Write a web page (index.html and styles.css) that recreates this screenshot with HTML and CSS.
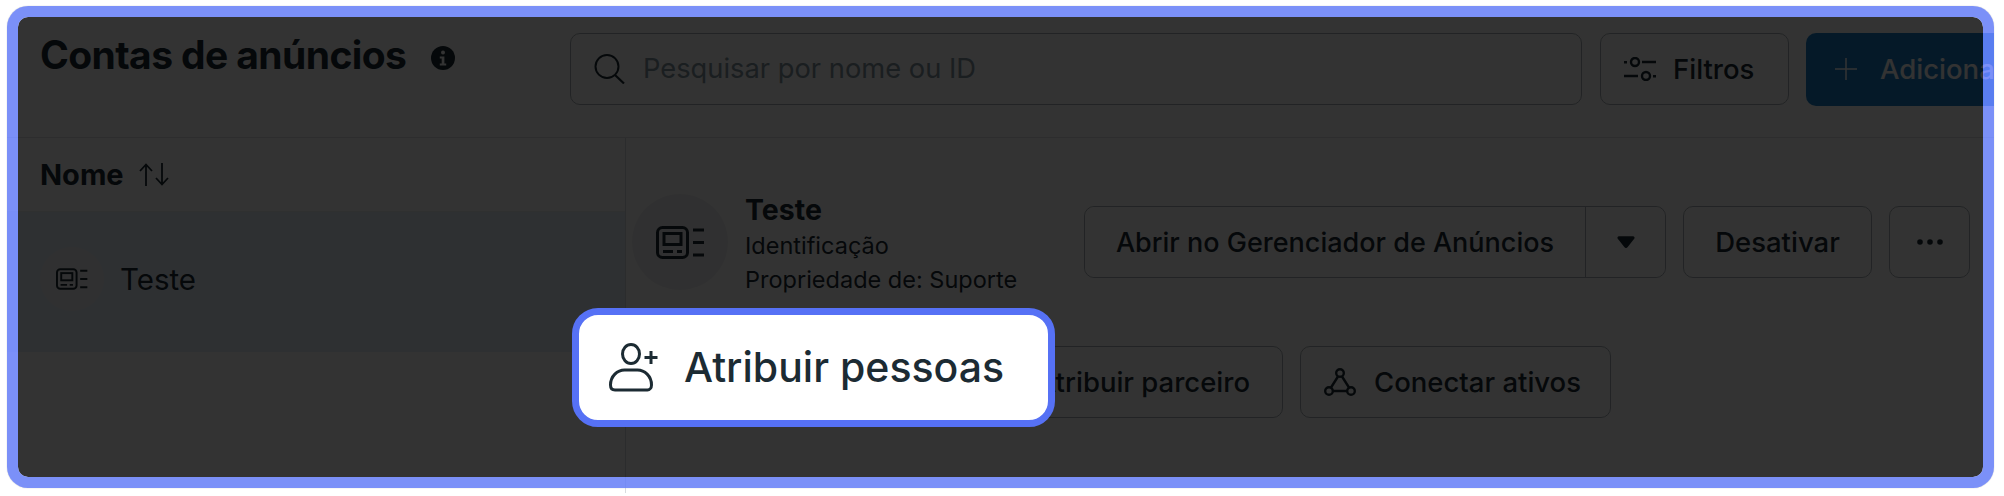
FILE: index.html
```html
<!DOCTYPE html>
<html lang="pt-BR">
<head>
<meta charset="utf-8">
<title>Contas de anúncios</title>
<link rel="stylesheet" href="styles.css">
</head>
<body>
<div class="app">
  <header class="topbar">
    <div class="title-group">
      <h1 class="title">Contas de anúncios</h1>
      <svg class="info-icon" viewBox="0 0 24 24"><circle cx="12" cy="12" r="12" fill="#1c2b33"/><circle cx="12" cy="6.600" r="2" fill="#fff"/><path d="M8.800 10.400h4.600v7.200h1.800v2H8.800v-2h1.900v-5.200H8.800z" fill="#fff"/></svg>
    </div>
    <div class="search">
      <svg class="search-icon" viewBox="0 0 31 30"><circle cx="13" cy="12.500" r="11.500" fill="none" stroke="#1c2b33" stroke-width="2"/><path d="M21 21l9 8.500" fill="none" stroke="#1c2b33" stroke-width="2.200"/></svg>
      <span class="placeholder">Pesquisar por nome ou ID</span>
    </div>
    <button class="btn btn-filter">
      <svg class="icon-filter" viewBox="0 0 32 24"><g fill="none" stroke="#1c2b33" stroke-width="2.400"><circle cx="11" cy="5" r="4"/><circle cx="22" cy="19" r="4"/><path d="M18 5h14M0 19h14"/></g><path d="M0 4h3v2.400H0zM29 18h3v2.400h-3z" fill="#1c2b33"/></svg>
      <span>Filtros</span>
    </button>
    <button class="btn-add">
      <svg class="icon-plus" viewBox="0 0 24 24"><path d="M12 1v22M1 12h22" stroke="#fff" stroke-width="1.500" fill="none"/></svg>
      <span>Adicionar</span>
    </button>
  </header>
  <div class="content">
    <aside class="list">
      <div class="list-head">
        <span class="list-head-label">Nome</span>
        <svg class="sort" viewBox="0 0 30 23"><g fill="none" stroke="#1c2b33" stroke-width="1.800"><path d="M7 23V2M1 8l6-6.500L13 8"/><path d="M23 0v21M17 15l6 6.500L29 15"/></g></svg>
      </div>
      <div class="list-row">
        <span class="avatar avatar-small">
          <svg class="asset-small" viewBox="0 0 49 33"><use href="#asset"/></svg>
        </span>
        <span class="row-name">Teste</span>
      </div>
    </aside>
    <main class="detail">
      <div class="detail-top">
        <span class="avatar avatar-large">
          <svg class="asset-large" viewBox="0 0 49 33"><g id="asset" fill="none" stroke="#1c2b33" stroke-width="3"><rect x="1.500" y="1.500" width="30" height="30" rx="5"/><rect x="8" y="7.500" width="17" height="11"/><path d="M7 25.500h10M21 25.500h5M37 4h11M37 16.500h11M37 29h11"/></g></svg>
        </span>
        <div class="identity">
          <div class="identity-name">Teste</div>
          <div class="identity-line">Identificação</div>
          <div class="identity-line">Propriedade de: Suporte</div>
        </div>
        <div class="actions">
          <div class="split">
            <button class="split-main">Abrir no Gerenciador de Anúncios</button>
            <button class="split-caret"><svg class="caret" viewBox="0 0 18 12"><path d="M.600 2.400A1.500 1.500 0 0 1 2 .200h14a1.500 1.500 0 0 1 1.400 2.200l-6.700 8.700a2 2 0 0 1-3.400 0z" fill="#1c2b33"/></svg></button>
          </div>
          <button class="btn btn-off">Desativar</button>
          <button class="btn btn-more"><svg class="dots" viewBox="0 0 26 6"><circle cx="3" cy="3" r="2.800" fill="#1c2b33"/><circle cx="13" cy="3" r="2.800" fill="#1c2b33"/><circle cx="23" cy="3" r="2.800" fill="#1c2b33"/></svg></button>
        </div>
      </div>
      <div class="detail-bottom">
        <button class="btn btn-partner">Atribuir parceiro</button>
        <button class="btn btn-connect">
          <svg class="icon-connect" viewBox="0 0 32 28"><g fill="none" stroke="#1c2b33" stroke-width="2.400"><circle cx="16" cy="5" r="3.800"/><circle cx="5" cy="23" r="3.800"/><circle cx="27" cy="23" r="3.800"/><path d="M14 8.500L7 19.500M18 8.500L25 19.500M9 23h14"/></g></svg>
          <span>Conectar ativos</span>
        </button>
      </div>
    </main>
  </div>
</div>
<div class="frame"></div>
<div class="spotlight">
  <svg class="icon-person" viewBox="0 0 50 49"><g fill="none" stroke="#1c2b33" stroke-width="3"><ellipse cx="22" cy="11" rx="8.500" ry="9.500"/><path d="M1.500 42c0-9 7-15 14-15h13c7 0 14 6 14 15 0 3-2 5-4 5H6c-3 0-4.500-2-4.500-5z"/><path d="M35.500 14.500h13M42 8v13"/></g></svg>
  <span class="spotlight-label">Atribuir pessoas</span>
</div>
</body>
</html>
```

FILE: styles.css
```css
* { box-sizing: border-box; }
html, body { margin: 0; height: 496px; overflow: hidden; background: #fff; }
body {
  font-family: Inter, "Noto Sans", "Liberation Sans", sans-serif;
  color: #1c2b33;
}
button { font: inherit; color: inherit; background: #fff; margin: 0; }
svg { display: block; flex: none; }

.app {
  margin: 6px 10px 0 7px;
  height: 487px;
  overflow: hidden;
  background: #fff;
}

.topbar {
  height: 131.5px;
  padding: 26.5px 0 0 33px;
  display: flex;
  align-items: flex-start;
  border-bottom: 1px solid #dfe2e5;
}
.title-group { display: flex; flex: none; width: 530px; align-items: center; margin-top: -1px; }
.title { margin: 0; font-size: 39px; line-height: 46px; font-weight: 700; letter-spacing: -0.6px; white-space: nowrap; }
.info-icon { width: 24px; height: 24px; margin: 6px 0 0 25px; }

.search {
  flex: none;
  width: 1012px;
  height: 72px;
  border: 1px solid #aab1b7;
  border-radius: 10px;
  display: flex;
  align-items: center;
  padding-left: 23px;
  gap: 18px;
}
.search-icon { width: 31px; height: 30px; }
.placeholder { font-size: 27.300px; color: #8495a0; white-space: nowrap; }

.btn {
  height: 72px;
  border: 1px solid #aab1b7;
  border-radius: 10px;
  display: flex;
  align-items: center;
  justify-content: center;
  font-size: 27.500px;
  font-weight: 500;
  padding: 0;
  white-space: nowrap;
}
.btn-filter { flex: none; width: 189px; margin-left: 18px; gap: 17px; justify-content: flex-start; padding-left: 23px; }
.icon-filter { width: 32px; height: 24px; }
.btn-add {
  flex: none;
  width: 260px;
  height: 73px;
  margin-left: 17px;
  border: 0;
  border-radius: 10px 0 0 10px;
  background: #1d7fc8;
  color: #fff;
  display: flex;
  align-items: center;
  gap: 22px;
  padding: 0 0 0 28px;
  font-size: 27.500px;
  font-weight: 500;
  white-space: nowrap;
}
.icon-plus { width: 24px; height: 24px; }

.content { display: flex; height: 355px; }
.list { width: 619px; flex: none; border-right: 1px solid #d8dbde; }
.list-head {
  height: 74px;
  padding-left: 33px;
  display: flex;
  align-items: center;
  gap: 15px;
  border-bottom: 1px solid #eceef0;
}
.list-head-label { font-size: 29px; font-weight: 700; }
.sort { width: 30px; height: 23px; }
.list-row {
  height: 140px;
  padding: 0 0 5px 33px;
  background: #e6f0fb;
  display: flex;
  align-items: center;
  gap: 16px;
}
.row-name { font-size: 29.500px; }
.avatar {
  flex: none;
  border-radius: 50%;
  background: #f0f1f2;
  display: flex;
  align-items: center;
  justify-content: center;
}
.avatar-small { width: 64px; height: 64px; }
.asset-small { width: 32px; height: 22px; }
.avatar-large { width: 96px; height: 96px; }
.asset-large { width: 49px; height: 33px; }

.detail { flex: 1; min-width: 0; padding: 56px 24px 0 6px; }
.detail-top { display: flex; align-items: center; gap: 17px; height: 97px; }
.identity { display: flex; flex-direction: column; gap: 2px; margin-top: 4px; }
.identity-name { font-size: 28.500px; font-weight: 700; line-height: 36px; }
.identity-line { font-size: 23.500px; line-height: 32px; white-space: nowrap; }
.actions { margin-left: auto; display: flex; gap: 17px; }
.split {
  display: flex;
  height: 72px;
  border: 1px solid #aab1b7;
  border-radius: 10px;
}
.split-main {
  width: 501px;
  border: 0;
  border-right: 1px solid #aab1b7;
  border-radius: 10px 0 0 10px;
  font-size: 27px;
  font-weight: 500;
  padding: 0;
  white-space: nowrap;
}
.split-caret {
  width: 79px;
  border: 0;
  border-radius: 0 10px 10px 0;
  display: flex;
  align-items: center;
  justify-content: center;
  padding: 0;
}
.caret { width: 18px; height: 12px; }
.btn-off { width: 189px; }
.btn-more { width: 81px; }
.dots { width: 26px; height: 6px; }

.detail-bottom { display: flex; gap: 17px; margin: 55px 0 0 334px; }
.btn-partner { width: 317px; justify-content: flex-end; padding-right: 32px; }
.btn-connect { width: 311px; gap: 18px; justify-content: flex-start; padding-left: 23px; }
.icon-connect { width: 32px; height: 28px; }

.frame {
  position: absolute;
  left: 7px;
  top: 6px;
  width: 1987px;
  height: 482px;
  border: 11px solid rgba(100, 124, 247, 0.85);
  border-radius: 21px;
  background: rgba(0, 0, 0, 0.8);
  background-clip: padding-box;
  box-shadow: 0 0 1px rgba(0, 0, 0, 0.35);
}

.spotlight {
  position: absolute;
  left: 572px;
  top: 308px;
  width: 483px;
  height: 119px;
  background: #fff;
  border: 7px solid #5671f5;
  border-radius: 26px;
  display: flex;
  align-items: center;
  padding: 0 0 2px 30px;
  gap: 25px;
}
.icon-person { width: 50px; height: 49px; margin-top: 2px; }
.spotlight-label { font-size: 41px; font-weight: 500; white-space: nowrap; }
```
